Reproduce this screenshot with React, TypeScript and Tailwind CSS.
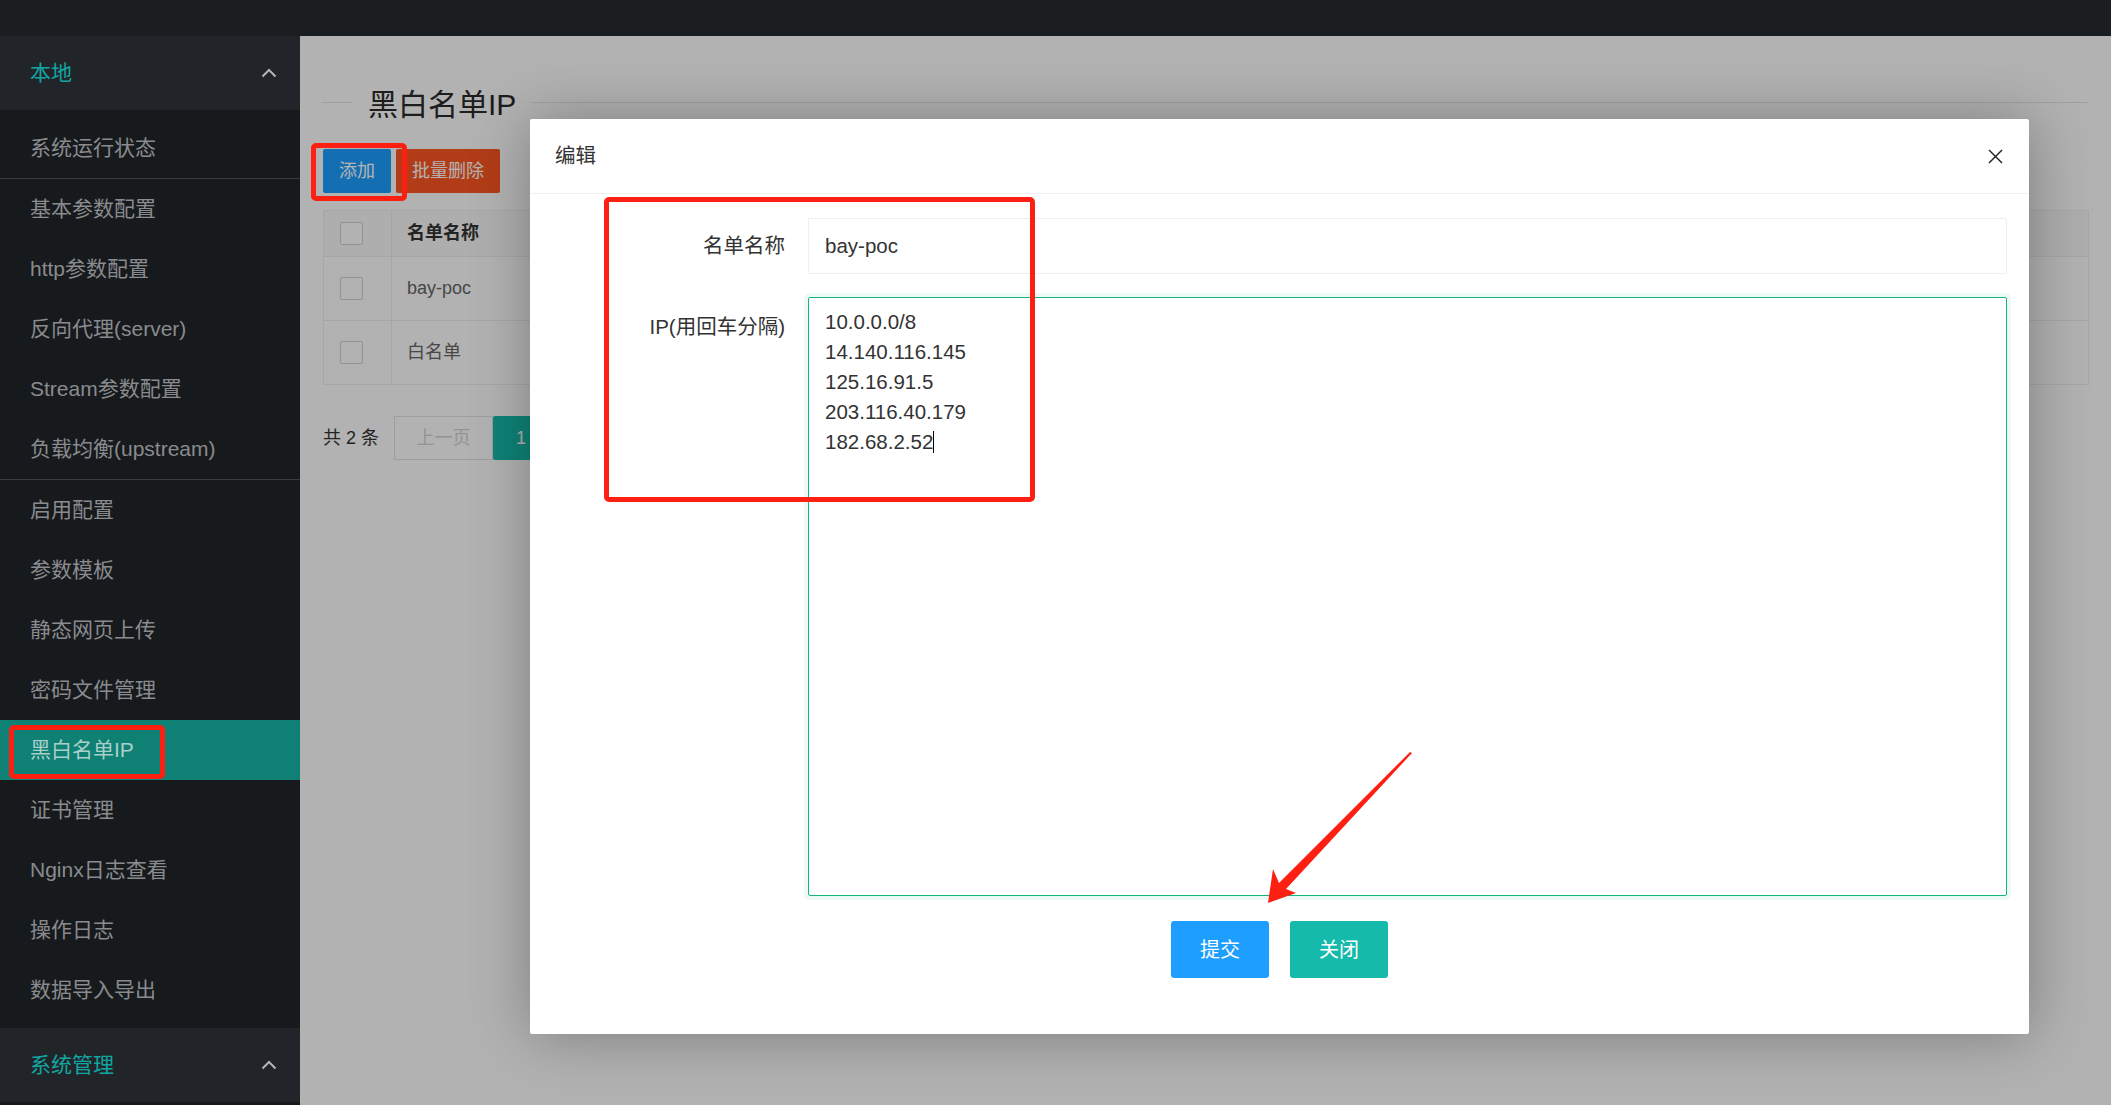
import clsx from "clsx";

const font = "font-['Liberation_Sans','Noto_Sans_CJK_SC',sans-serif]";

const menuGroups = [
  ["系统运行状态"],
  ["基本参数配置", "http参数配置", "反向代理(server)", "Stream参数配置", "负载均衡(upstream)"],
  [
    "启用配置",
    "参数模板",
    "静态网页上传",
    "密码文件管理",
    "黑白名单IP",
    "证书管理",
    "Nginx日志查看",
    "操作日志",
    "数据导入导出",
  ],
];
const activeItem = "黑白名单IP";

const ipLines = ["10.0.0.0/8", "14.140.116.145", "125.16.91.5", "203.116.40.179", "182.68.2.52"];

const rows = ["bay-poc", "白名单"];

function ChevronUp() {
  return (
    <svg width="16" height="10" viewBox="0 0 16 10" fill="none" stroke="#b2b4b6" strokeWidth="2">
      <polyline points="1.5,8.5 8,2 14.5,8.5" />
    </svg>
  );
}

function SideHeader({ label }: { label: string }) {
  return (
    <div className="flex h-[74px] items-center justify-between bg-[#212529] pl-[30px] pr-[23px]">
      <span className="text-[21px] leading-[30px] text-[#12a5a1]">{label}</span>
      <ChevronUp />
    </div>
  );
}

function Sidebar() {
  return (
    <aside className="w-[300px] shrink-0 overflow-hidden bg-[#171a1d]">
      <SideHeader label="本地" />
      <div className="pt-[8px]">
        {menuGroups.map((group, i) => (
          <div
            key={i}
            className={i < menuGroups.length - 1 ? "border-b border-[#3a3d40]" : "pb-[8px]"}
          >
            {group.map((item) => (
              <div
                key={item}
                className={clsx(
                  "flex h-[60px] items-center pl-[30px] text-[21px] leading-[30px]",
                  item === activeItem ? "bg-[#0f8074] text-[#a9cfca]" : "text-[#898b8e]"
                )}
              >
                {item}
              </div>
            ))}
          </div>
        ))}
      </div>
      <SideHeader label="系统管理" />
    </aside>
  );
}

function Checkbox() {
  return <span className="block h-[23px] w-[23px] rounded-[2px] border border-[#d2d2d2] bg-white" />;
}

function PageContent() {
  return (
    <div className="pl-[22px] pr-[22px] pt-[48px]">
      <div className="flex h-[42px] items-center">
        <span className="mb-[6px] h-px w-[31px] bg-[#e6e6e6]" />
        <h1 className="px-[15px] text-[30px] leading-[42px] text-[#2a2a2a]">黑白名单IP</h1>
        <span className="mb-[6px] h-px flex-1 bg-[#e6e6e6]" />
      </div>

      <div className="mt-[23px] flex gap-[5px] pl-[1px]">
        <button className="h-[44px] rounded-[2px] bg-[#1e9fff] px-[16px] text-[18px] leading-[44px] text-white">
          添加
        </button>
        <button className="h-[44px] rounded-[2px] bg-[#ff5722] px-[16px] text-[18px] leading-[44px] text-white">
          批量删除
        </button>
      </div>

      <table className="mt-[17px] ml-[1px] w-[calc(100%-1px)] border-collapse text-[18px]">
        <thead>
          <tr className="h-[46px] bg-[#fafafa]">
            <th className="w-[68px] border border-[#eee] pl-[16px] text-left">
              <Checkbox />
            </th>
            <th className="w-[420px] border border-[#eee] pl-[15px] text-left font-bold text-[#333]">
              名单名称
            </th>
            <th className="border border-[#eee]" />
            <th className="w-[260px] border border-[#eee]" />
          </tr>
        </thead>
        <tbody>
          {rows.map((r) => (
            <tr key={r} className="h-[64px]">
              <td className="border border-[#eee] pl-[16px]">
                <Checkbox />
              </td>
              <td className="border border-[#eee] pl-[15px] text-[#666]">{r}</td>
              <td className="border border-[#eee]" />
              <td className="border border-[#eee]" />
            </tr>
          ))}
        </tbody>
      </table>

      <div className="mt-[31px] flex h-[44px] items-center pl-[1px] text-[18px]">
        <span className="mr-[15px] text-[#333]">共 2 条</span>
        <span className="flex h-[44px] w-[99px] items-center justify-center border border-[#e2e2e2] text-[#d2d2d2]">
          上一页
        </span>
        <span className="flex h-[44px] w-[56px] items-center justify-center rounded-[2px] bg-[#16baaa] text-white">
          1
        </span>
      </div>
    </div>
  );
}

function EditModal() {
  return (
    <div className="absolute left-[230px] top-[83px] flex h-[915px] w-[1499px] flex-col rounded-[2px] bg-white shadow-[1px_1px_60px_rgba(0,0,0,0.3)]">
      <div className="flex h-[75px] items-center justify-between border-b border-[#f0f0f0] pl-[25px] pr-[26px]">
        <span className="text-[20.5px] leading-[30px] text-[#333]">编辑</span>
        <svg width="15" height="15" viewBox="0 0 15 15" stroke="#222" strokeWidth="1.4">
          <line x1="1" y1="1" x2="14" y2="14" />
          <line x1="14" y1="1" x2="1" y2="14" />
        </svg>
      </div>

      <div className="pr-[22px] pt-[24px] text-[20.5px] text-[#333]">
        <div className="flex items-center">
          <label className="w-[255px] text-right leading-[30px]">名单名称</label>
          <div className="ml-[23px] flex h-[56px] flex-1 items-center rounded-[2px] border border-[#eee] pl-[16px] leading-[30px]">
            bay-poc
          </div>
        </div>
        <div className="mt-[23px] flex items-start">
          <label className="w-[255px] pt-[15px] text-right leading-[30px]">IP(用回车分隔)</label>
          <div className="ml-[23px] h-[599px] flex-1 rounded-[2px] border border-[#16b777] pl-[16px] pt-[9px] leading-[30px] shadow-[0_0_0_4px_rgba(22,183,119,0.08)]">
            {ipLines.map((ip, i) => (
              <div key={ip} className="flex items-center">
                <span>{ip}</span>
                {i === ipLines.length - 1 && <span className="inline-block h-[22px] w-px bg-black" />}
              </div>
            ))}
          </div>
        </div>
      </div>

      <div className="mt-[25px] flex justify-center gap-[21px]">
        <button className="h-[57px] w-[98px] rounded-[3px] bg-[#1e9fff] text-[20px] text-white">提交</button>
        <button className="h-[57px] w-[98px] rounded-[3px] bg-[#16baaa] text-[20px] text-white">关闭</button>
      </div>
    </div>
  );
}

export default function App() {
  return (
    <div className={clsx("relative flex h-[1105px] w-[2111px] flex-col overflow-hidden", font)}>
      <header className="h-[36px] shrink-0 bg-[#1a1e21]" />
      <div className="flex min-h-0 flex-1">
        <Sidebar />
        <main className="relative flex-1 overflow-hidden bg-white">
          <PageContent />
          <div className="absolute inset-0 bg-black/30" />
          <EditModal />
        </main>
      </div>

      {/* red annotation marks */}
      <div className="pointer-events-none absolute left-[9px] top-[725px] h-[54px] w-[156px] rounded-[5px] border-[5px] border-[#fc1f12]" />
      <div className="pointer-events-none absolute left-[311px] top-[143px] h-[58px] w-[96px] rounded-[5px] border-[5px] border-[#fc1f12]" />
      <div className="pointer-events-none absolute left-[604px] top-[197px] h-[305px] w-[431px] rounded-[5px] border-[5px] border-[#fc1f12]" />
      <svg
        className="pointer-events-none absolute left-0 top-0"
        width="2111"
        height="1105"
        viewBox="0 0 2111 1105"
      >
        <polygon
          fill="#fc1f12"
          points="1412,753 1286,889 1296,893 1268,903 1273,869 1279,883 1410,752"
        />
      </svg>
    </div>
  );
}
